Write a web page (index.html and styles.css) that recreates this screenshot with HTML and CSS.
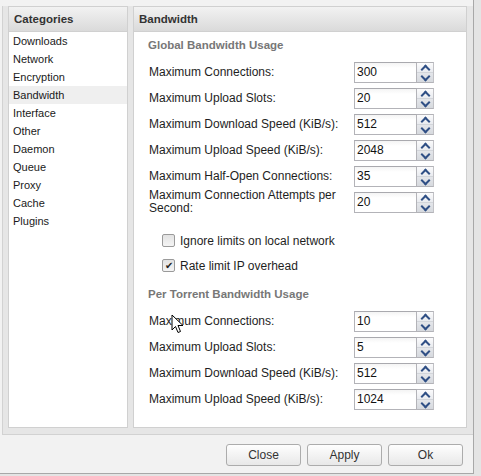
FILE: index.html
```html
<!DOCTYPE html>
<html lang="en">
<head>
  <meta charset="UTF-8">
  <title>Preferences - Bandwidth</title>
  <link rel="stylesheet" href="styles.css">
</head>
<body>

  <div class="window">
    <div class="main">
      <div class="panel categories">
        <div class="panel-header">Categories</div>
        <ul class="category-list">
          <li>Downloads</li>
          <li>Network</li>
          <li>Encryption</li>
          <li class="selected">Bandwidth</li>
          <li>Interface</li>
          <li>Other</li>
          <li>Daemon</li>
          <li>Queue</li>
          <li>Proxy</li>
          <li>Cache</li>
          <li>Plugins</li>
        </ul>
      </div>

      <div class="panel prefs">
        <div class="panel-header">Bandwidth</div>
        <div class="prefs-body">
          <div class="group-title">Global Bandwidth Usage</div>

          <div class="field">
            <label>Maximum Connections:</label>
            <div class="spinner"><input value="300"><div class="spin-btns"><span class="spin up"></span><span class="spin down"></span></div></div>
          </div>
          <div class="field">
            <label>Maximum Upload Slots:</label>
            <div class="spinner"><input value="20"><div class="spin-btns"><span class="spin up"></span><span class="spin down"></span></div></div>
          </div>
          <div class="field">
            <label>Maximum Download Speed (KiB/s):</label>
            <div class="spinner"><input value="512"><div class="spin-btns"><span class="spin up"></span><span class="spin down"></span></div></div>
          </div>
          <div class="field">
            <label>Maximum Upload Speed (KiB/s):</label>
            <div class="spinner"><input value="2048"><div class="spin-btns"><span class="spin up"></span><span class="spin down"></span></div></div>
          </div>
          <div class="field">
            <label>Maximum Half-Open Connections:</label>
            <div class="spinner"><input value="35"><div class="spin-btns"><span class="spin up"></span><span class="spin down"></span></div></div>
          </div>
          <div class="field">
            <label>Maximum Connection Attempts per Second:</label>
            <div class="spinner"><input value="20"><div class="spin-btns"><span class="spin up"></span><span class="spin down"></span></div></div>
          </div>

          <div class="checks">
            <label class="check"><span class="box"></span>Ignore limits on local network</label>
            <label class="check"><span class="box checked">&#10004;</span>Rate limit IP overhead</label>
          </div>

          <div class="group-title second">Per Torrent Bandwidth Usage</div>

          <div class="field">
            <label>Maximum Connections:</label>
            <div class="spinner"><input value="10"><div class="spin-btns"><span class="spin up"></span><span class="spin down"></span></div></div>
          </div>
          <div class="field">
            <label>Maximum Upload Slots:</label>
            <div class="spinner"><input value="5"><div class="spin-btns"><span class="spin up"></span><span class="spin down"></span></div></div>
          </div>
          <div class="field">
            <label>Maximum Download Speed (KiB/s):</label>
            <div class="spinner"><input value="512"><div class="spin-btns"><span class="spin up"></span><span class="spin down"></span></div></div>
          </div>
          <div class="field">
            <label>Maximum Upload Speed (KiB/s):</label>
            <div class="spinner"><input value="1024"><div class="spin-btns"><span class="spin up"></span><span class="spin down"></span></div></div>
          </div>
        </div>
      </div>
    </div>

    <div class="footer">
      <button>Close</button>
      <button>Apply</button>
      <button>Ok</button>
    </div>
  </div>

  <!-- mouse pointer seen in the screenshot -->
  <svg class="cursor" width="13" height="20" viewBox="0 0 13 20">
    <path d="M1 1 L1 16 L4.5 12.5 L7 18.5 L9.5 17.5 L7 11.5 L12 11.5 Z" fill="#fff" stroke="#000" stroke-width="1" stroke-linejoin="round"/>
  </svg>

</body>
</html>
```

FILE: styles.css
```css
* {
  margin: 0;
  padding: 0;
  box-sizing: border-box;
}

body {
  background: #e4e4e4;
  font-family: "Liberation Sans", Arial, sans-serif;
  color: #222;
  position: relative;
  width: 481px;
  height: 476px;
  overflow: hidden;
}

.window {
  width: 474px;
  height: 474px;
  background: #f2f2f2;
  border-right: 1px solid #a8a8a8;
  border-bottom: 1px solid #a8a8a8;
  padding-top: 6px;
}

.main {
  display: flex;
  gap: 5px;
  margin-left: 2px;
  height: 429px;
  padding: 0 6px 6px 5px;
  background: #e6e6e6;
  border-left: 1px solid #d2d2d2;
  border-bottom: 1px solid #d2d2d2;
}

.panel {
  background: #fff;
  border: 1px solid #d0d0d0;
}

.categories {
  width: 120px;
}

.prefs {
  flex: 1;
}

.panel-header {
  height: 25px;
  padding-left: 5px;
  line-height: 24px;
  font-size: 11.5px;
  font-weight: bold;
  color: #333;
  background: linear-gradient(#f2f2f2, #dadada);
  border-bottom: 1px solid #d0d0d0;
}

.category-list {
  list-style: none;
}

.category-list li {
  height: 18px;
  line-height: 18px;
  padding-left: 4px;
  font-size: 11px;
  color: #1a1a1a;
}

.category-list li.selected {
  background: #efefef;
}

.prefs-body {
  padding: 4px 32px 0 14px;
}

.group-title {
  height: 18px;
  line-height: 18px;
  font-size: 11.5px;
  font-weight: bold;
  color: #777;
  margin-bottom: 5px;
}

.group-title.second {
  margin-top: 7px;
}

.field {
  display: flex;
  align-items: center;
  height: 26px;
}

.field label {
  flex: 1;
  padding-left: 1px;
  padding-right: 10px;
  font-size: 12px;
  line-height: 13px;
  color: #1e1e1e;
}

.spinner {
  display: flex;
  width: 80px;
  height: 21px;
}

.spinner input {
  width: 63px;
  height: 21px;
  border: 1px solid #b3b3b8;
  border-top-color: #a9a9ae;
  background: linear-gradient(#f4f4f4, #fff 5px);
  padding-left: 2px;
  font-family: "Liberation Sans", Arial, sans-serif;
  font-size: 12px;
  color: #111;
  outline: none;
}

.spin-btns {
  width: 17px;
  display: flex;
  flex-direction: column;
  border-top: 1px solid #b3b3b8;
  border-right: 1px solid #c2c2c6;
  border-bottom: 1px solid #b3b3b8;
}

.spin {
  flex: 1;
  position: relative;
}

.spin.up {
  background: linear-gradient(#fbfbfc, #e9ebef);
  border-bottom: 1px solid #d2d5da;
}

.spin.down {
  background: linear-gradient(#e4e6ea, #d6d9de);
}

.spin::after {
  content: "";
  position: absolute;
  left: 5px;
  width: 5px;
  height: 5px;
  border-left: 2px solid #2f4f85;
  border-top: 2px solid #2f4f85;
}

.spin.up::after {
  top: 3px;
  transform: rotate(45deg);
}

.spin.down::after {
  top: 0px;
  transform: rotate(225deg);
}

.checks {
  margin-top: 13px;
  padding-left: 14px;
}

.check {
  display: flex;
  align-items: center;
  gap: 5px;
  height: 25px;
  font-size: 12px;
  color: #1e1e1e;
}

.box {
  width: 13px;
  height: 13px;
  border: 1px solid #9a9a9a;
  border-radius: 2px;
  background: linear-gradient(#e2e2e2, #f4f4f4);
  font-size: 10px;
  line-height: 11px;
  text-align: center;
  color: #222;
}

.footer {
  display: flex;
  justify-content: flex-end;
  gap: 6px;
  padding: 9px 10px 0 0;
}

button {
  width: 75px;
  height: 22px;
  border: 1px solid #acacac;
  border-radius: 3px;
  background: linear-gradient(#fefefe, #e8e8e8);
  font-family: "Liberation Sans", Arial, sans-serif;
  font-size: 12px;
  color: #333;
}

.cursor {
  position: absolute;
  left: 171px;
  top: 314px;
}
```
